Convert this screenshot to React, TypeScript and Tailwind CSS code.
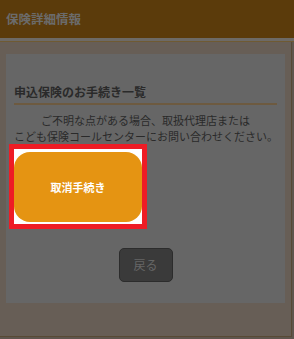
export default function App() {
  return (
    <div className="w-[294px] h-[339px] overflow-hidden bg-[#5f564e] font-['Noto_Sans_CJK_JP','Noto_Sans',sans-serif]">
      {/* Header */}
      <div className="h-[38px] bg-[#5b3b0b] px-[6px] flex items-center">
        <span className="text-[12.5px] font-bold text-[#6b6b6b] leading-none">保険詳細情報</span>
      </div>
      <div className="h-[3px] bg-[#6d6a66]" />
      <div className="h-[1px] bg-[#6f5a33]" />

      {/* Body */}
      <div className="w-[292px] h-[295px] bg-[#675e56] border-r border-b border-[#584a35] pt-[12px] px-[6px]">
        <div className="h-[249px] bg-[#666666] px-[8px] pt-[30px] flex flex-col">
          <h2 className="text-[12px] font-bold text-[#2a2a2a] leading-[16px] pb-[3px] border-b-2 border-[#6d5a40]">
            申込保険のお手続き一覧
          </h2>
          <p className="mt-[7px] text-[11px] leading-[16px] text-[#2a2a2a] text-center whitespace-nowrap">
            ご不明な点がある場合、取扱代理店または
            <br />
            こども保険コールセンターにお問い合わせください。
          </p>

          {/* Highlighted action */}
          <div className="-ml-[5px] w-[138px] h-[85px] border-[5px] border-[#ee1c25] bg-white pt-[3px]">
            <button className="w-[128px] h-[70px] rounded-[16px] bg-[#e59412] text-white text-[11px] font-bold flex items-center justify-center">
              取消手続き
            </button>
          </div>

          {/* Back */}
          <div className="mt-[19px] flex justify-center">
            <button className="w-[54px] h-[34px] rounded-[5px] bg-[#3a3a3a] border border-[#2c2c2c] text-[12px] text-[#666666] flex items-center justify-center">
              戻る
            </button>
          </div>
        </div>
      </div>
    </div>
  );
}
